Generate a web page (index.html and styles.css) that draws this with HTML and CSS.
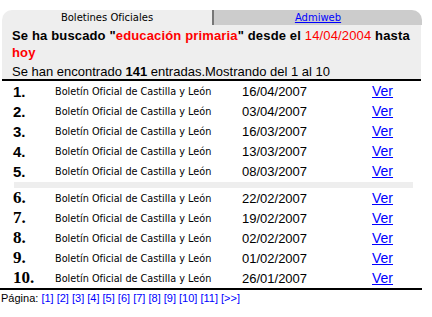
FILE: index.html
```html
<!DOCTYPE html>
<html lang="es">
<head>
  <meta charset="UTF-8">
  <title>Boletines Oficiales</title>
  <link rel="stylesheet" href="styles.css">
</head>
<body>
  <div class="wrap">
    <div class="tabs">
      <div class="tab tab-active">Boletines Oficiales</div>
      <div class="tab tab-other"><a href="#">Admiweb</a></div>
    </div>
    <div class="summary">
      <p class="query">Se ha buscado "<span class="hl">educación primaria</span>" desde el <span class="date-hl">14/04/2004</span> hasta <span class="hl">hoy</span></p>
      <p class="count">Se han encontrado <b>141</b> entradas.Mostrando del 1 al 10</p>
    </div>
    <table class="results">
      <tr><td class="num">1.</td><td class="title">Boletín Oficial de Castilla y León</td><td class="date">16/04/2007</td><td class="link"><a href="#">Ver</a></td></tr>
      <tr><td class="num">2.</td><td class="title">Boletín Oficial de Castilla y León</td><td class="date">03/04/2007</td><td class="link"><a href="#">Ver</a></td></tr>
      <tr><td class="num">3.</td><td class="title">Boletín Oficial de Castilla y León</td><td class="date">16/03/2007</td><td class="link"><a href="#">Ver</a></td></tr>
      <tr><td class="num">4.</td><td class="title">Boletín Oficial de Castilla y León</td><td class="date">13/03/2007</td><td class="link"><a href="#">Ver</a></td></tr>
      <tr><td class="num">5.</td><td class="title">Boletín Oficial de Castilla y León</td><td class="date">08/03/2007</td><td class="link"><a href="#">Ver</a></td></tr>
      <tr class="sep"><td colspan="4"><div class="bar"></div></td></tr>
      <tr><td class="num serif">6.</td><td class="title">Boletín Oficial de Castilla y León</td><td class="date">22/02/2007</td><td class="link"><a href="#">Ver</a></td></tr>
      <tr><td class="num serif">7.</td><td class="title">Boletín Oficial de Castilla y León</td><td class="date">19/02/2007</td><td class="link"><a href="#">Ver</a></td></tr>
      <tr><td class="num serif">8.</td><td class="title">Boletín Oficial de Castilla y León</td><td class="date">02/02/2007</td><td class="link"><a href="#">Ver</a></td></tr>
      <tr><td class="num serif">9.</td><td class="title">Boletín Oficial de Castilla y León</td><td class="date">01/02/2007</td><td class="link"><a href="#">Ver</a></td></tr>
      <tr><td class="num serif">10.</td><td class="title">Boletín Oficial de Castilla y León</td><td class="date">26/01/2007</td><td class="link"><a href="#">Ver</a></td></tr>
    </table>
    <div class="pager">
      Página:
      <a href="#">[1]</a> <a href="#">[2]</a> <a href="#">[3]</a> <a href="#">[4]</a> <a href="#">[5]</a> <a href="#">[6]</a>
      <a href="#">[7]</a> <a href="#">[8]</a> <a href="#">[9]</a> <a href="#">[10]</a> <a href="#">[11]</a> <a href="#">[&gt;&gt;]</a>
    </div>
  </div>
</body>
</html>
```

FILE: styles.css
```css
body {
  margin: 0;
  background: #fff;
  font-family: "Liberation Sans", Arial, sans-serif;
  color: #000;
}

.wrap {
  width: 422px;
}

.tabs {
  display: flex;
  margin-top: 10px;
  padding-left: 2px;
}

.tab {
  height: 15px;
  line-height: 15px;
  font-family: "DejaVu Sans", Verdana, sans-serif;
  font-size: 10px;
  text-align: center;
}

.tab-active {
  width: 212px;
  background: #eeeeee;
  border-top-left-radius: 10px;
  border-right: 2px solid #777;
  box-sizing: border-box;
}

.tab-other {
  width: 208px;
  background: #cccccc;
  border-top-right-radius: 10px;
}

.tab-other a {
  color: #0000ff;
}

.summary {
  margin-left: 2px;
  width: 419px;
  background: #eeeeee;
  padding: 2px 0 0 10px;
  box-sizing: border-box;
  border-bottom: 2px solid #000;
}

.summary p {
  margin: 0;
  font-size: 13px;
  line-height: 17px;
}

.query {
  font-weight: bold;
  letter-spacing: 0.15px;
}

.summary .count {
  padding-top: 3px;
  line-height: 15px;
}

.hl,
.date-hl {
  color: #ff0000;
}

.date-hl {
  font-weight: normal;
}

.results {
  border-collapse: collapse;
  width: 422px;
}

.results td {
  padding: 0;
  height: 20px;
  vertical-align: middle;
}

.num {
  width: 42px;
  padding-left: 13px !important;
  font-size: 15px;
  font-weight: bold;
}

.num.serif {
  font-family: "Liberation Serif", "Times New Roman", serif;
  font-size: 17px;
}

.title {
  width: 187px;
  font-family: "DejaVu Sans", Verdana, sans-serif;
  font-size: 9.7px;
}

.date {
  width: 130px;
  font-size: 13px;
}

.link {
  font-size: 14px;
}

.link a {
  color: #0000ff;
}

.sep td {
  height: 7px;
}

.bar {
  margin-left: 14px;
  width: 399px;
  height: 6px;
  background: #eeeeee;
}

.pager {
  border-top: 2px solid #000;
  font-size: 11px;
  line-height: 16px;
  padding-left: 1px;
}

.pager a {
  color: #0000ff;
  text-decoration: none;
}
```
